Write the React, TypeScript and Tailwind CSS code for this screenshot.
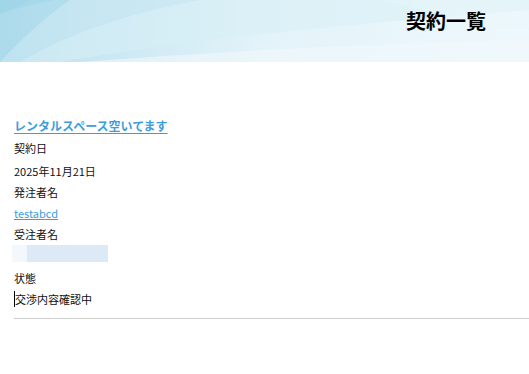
const font = { fontFamily: '"Noto Sans CJK JP", "Noto Sans", sans-serif' }

const Header = () => (
  <div className="relative h-[62px] overflow-hidden bg-gradient-to-r from-[#b9e0ee] via-[#e3f3f9] to-[#eef8fc]">
    {/* swooshes */}
    <svg className="absolute inset-0 h-full w-full" viewBox="0 0 529 62" preserveAspectRatio="none">
      <path d="M0 0 H30 Q15 8 0 14 Z" fill="#8fcfe3" opacity="0.8" />
      <path d="M0 14 Q60 -5 75 0 H0 Z" fill="#a7d9ea" opacity="0.7" />
      <path d="M0 62 Q40 20 70 0 H0 Z" fill="#9fd5e8" opacity="0.45" />
      <path d="M20 62 Q90 20 200 0 H70 Q40 20 0 62 Z" fill="#c4e6f1" opacity="0.5" />
      <path d="M60 62 Q250 30 529 10 V0 H200 Q90 20 20 62 Z" fill="#d7eef6" opacity="0.55" />
      <path d="M80 62 Q300 45 529 40 V62 Z" fill="#f1f9fc" opacity="0.6" />
      <path d="M380 0 Q460 20 529 30 V0 Z" fill="#e8f5fa" opacity="0.5" />
    </svg>
    <div className="relative flex h-full justify-end pr-[43px] pt-[6px]">
      <h1 className="text-[20px] font-bold leading-[30px] text-black" style={font}>契約一覧</h1>
    </div>
  </div>
)

const Row = ({ children, className = '' }: { children: React.ReactNode; className?: string }) => (
  <div className={`h-[21px] text-[11px] leading-[21px] text-[#111] ${className}`}>{children}</div>
)

export default function App() {
  return (
    <div className="min-h-[374px] w-[529px] bg-white" style={font}>
      <Header />
      <div className="pl-[14px] pt-[53px]">
        <a href="#" className="block h-[22px] text-[12px] font-bold leading-[22px] text-[#3d9ddb] underline underline-offset-2">
          レンタルスペース空いてます
        </a>
        <Row className="mt-[1px]">契約日</Row>
        <Row className="mt-[2px]">2025年11月21日</Row>
        <Row>発注者名</Row>
        <Row>
          <a href="#" className="text-[#3d9ddb] underline">testabcd</a>
        </Row>
        <Row>受注者名</Row>
        <div className="-ml-[2px] flex h-[17px] w-[96px]">
          <div className="w-[15px] bg-[#f3f8fc]" />
          <div className="flex-1 bg-[#dde9f5]" />
        </div>
        <Row className="mt-[6px]">状態</Row>
        <Row>
          <span className="border-l border-black">交渉内容確認中</span>
        </Row>
        <div className="mt-[8px] border-t border-[#cfcfcf]" />
      </div>
    </div>
  )
}
